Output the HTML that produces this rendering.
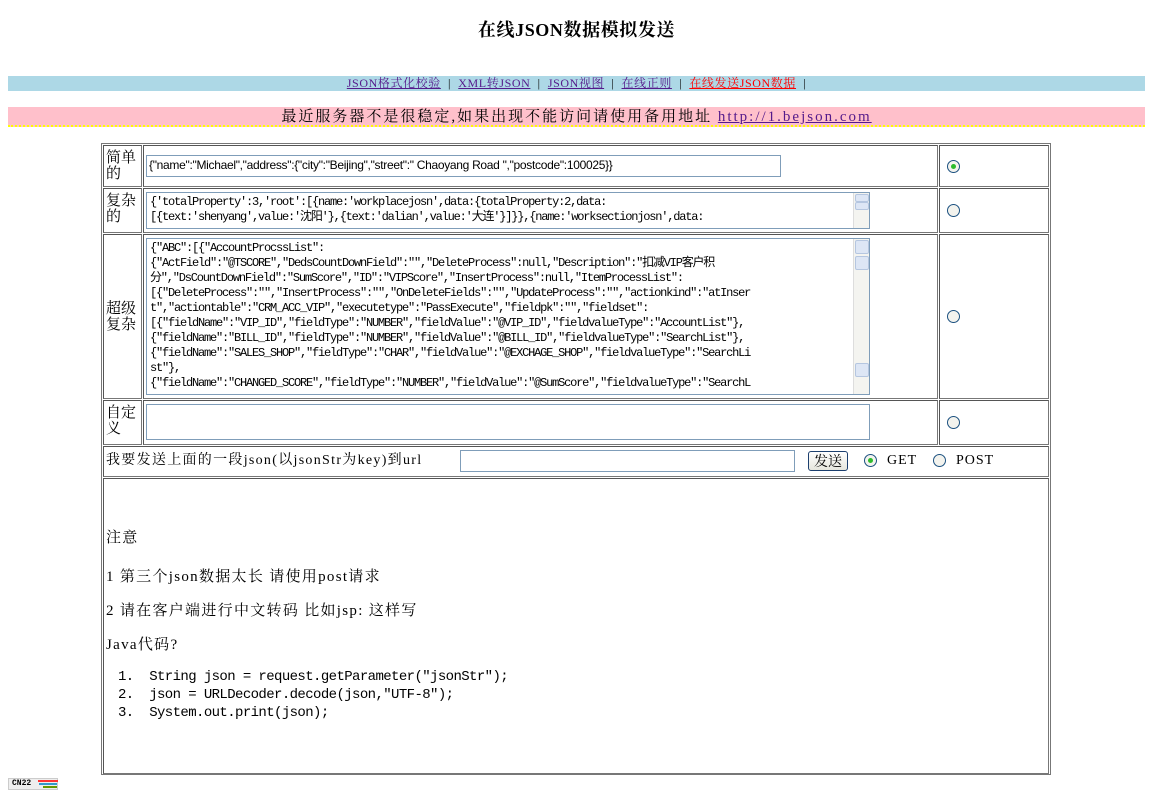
<!DOCTYPE html>
<html><head><meta charset="utf-8"><style>
*{box-sizing:border-box}
body{margin:0;width:1153px;height:801px;background:#fff;position:relative;font-family:"Liberation Serif","Noto Serif CJK SC",serif;font-size:14px;color:#000;overflow:hidden}
.a{position:absolute}
.cell{position:absolute;border:1px solid #777;border-top-color:#555;border-left-color:#555}
.ta{position:absolute;border:1px solid #7f9db9;background:#fff;overflow:hidden;font-family:"Liberation Mono","Noto Sans CJK SC",monospace;font-size:12px;line-height:15px;white-space:pre;letter-spacing:-1.2px;padding:2px 3px;color:#000}
.sb{position:absolute;right:0;top:0;bottom:0;width:16px;background:#f4f4f0;border-left:1px solid #ddd}
.btn{position:absolute;left:1px;width:14px;height:14px;border:1px solid #b5c6e0;background:#dde6f5;border-radius:2px}
.radio{position:absolute;width:13px;height:13px;border:1px solid #1c5180;border-radius:50%;background:#f3f3ee}
.radio.on::after{content:"";position:absolute;left:3px;top:3px;width:5px;height:5px;border-radius:50%;background:#2dbb2d}
a{color:#551a8b}
.lab{position:absolute;font-size:15px;line-height:16px;font-family:"Noto Serif CJK SC",serif}
</style></head><body>
<div class="a" style="left:0;width:1153px;top:16px;text-align:center;font-size:18px;font-weight:bold;letter-spacing:0.6px">在线JSON数据模拟发送</div>
<div class="a" style="left:8px;width:1137px;top:76px;height:15px;background:#add8e6;text-align:center;font-size:12px;line-height:15px;letter-spacing:0.6px">
<a href="#">JSON格式化校验</a> &nbsp;|&nbsp; <a href="#">XML转JSON</a> &nbsp;|&nbsp; <a href="#">JSON视图</a> &nbsp;|&nbsp; <a href="#">在线正则</a> &nbsp;|&nbsp; <a href="#" style="color:red">在线发送JSON数据</a> &nbsp;|</div>
<div class="a" style="left:8px;width:1137px;top:107px;height:20px;background:#ffc0cb;border-bottom:2px dotted #ff0;text-align:center;font-size:15px;line-height:20px;letter-spacing:2px">最近服务器不是很稳定,如果出现不能访问请使用备用地址 <a href="#">http://1.bejson.com</a></div>

<div class="a" style="left:101px;top:143px;width:950px;height:632px;border:1px solid #777"></div>

<div class="cell" style="left:103px;top:145px;width:39px;height:42px"></div>
<div class="lab" style="left:106px;top:149px">简单<br>的</div>
<div class="cell" style="left:143px;top:145px;width:795px;height:42px"></div>
<div class="ta" style="left:146px;top:155px;width:635px;height:22px;font-family:'Liberation Sans',sans-serif;font-size:12px;letter-spacing:-0.3px;line-height:16px;padding:1px 2px">{"name":"Michael","address":{"city":"Beijing","street":" Chaoyang Road ","postcode":100025}}</div>
<div class="cell" style="left:939px;top:145px;width:110px;height:42px"></div>
<div class="radio on" style="left:947px;top:160px"></div>

<div class="cell" style="left:103px;top:188px;width:39px;height:45px"></div>
<div class="lab" style="left:106px;top:192px">复杂<br>的</div>
<div class="cell" style="left:143px;top:188px;width:795px;height:45px"></div>
<div class="ta" style="left:146px;top:192px;width:724px;height:37px">{'totalProperty':3,'root':[{name:'workplacejosn',data:{totalProperty:2,data:
[{text:'shenyang',value:'沈阳'},{text:'dalian',value:'大连'}]}},{name:'worksectionjosn',data:<div class="sb"><div class="btn" style="top:1px;height:8px"></div><div class="btn" style="top:9px;height:8px"></div></div></div>
<div class="cell" style="left:939px;top:188px;width:110px;height:45px"></div>
<div class="radio" style="left:947px;top:204px"></div>

<div class="cell" style="left:103px;top:234px;width:39px;height:165px"></div>
<div class="lab" style="left:106px;top:300px">超级<br>复杂</div>
<div class="cell" style="left:143px;top:234px;width:795px;height:165px"></div>
<div class="ta" style="left:146px;top:238px;width:724px;height:157px">{"ABC":[{"AccountProcssList":
{"ActField":"@TSCORE","DedsCountDownField":"","DeleteProcess":null,"Description":"扣减VIP客户积
分","DsCountDownField":"SumScore","ID":"VIPScore","InsertProcess":null,"ItemProcessList":
[{"DeleteProcess":"","InsertProcess":"","OnDeleteFields":"","UpdateProcess":"","actionkind":"atInser
t","actiontable":"CRM_ACC_VIP","executetype":"PassExecute","fieldpk":"","fieldset":
[{"fieldName":"VIP_ID","fieldType":"NUMBER","fieldValue":"@VIP_ID","fieldvalueType":"AccountList"},
{"fieldName":"BILL_ID","fieldType":"NUMBER","fieldValue":"@BILL_ID","fieldvalueType":"SearchList"},
{"fieldName":"SALES_SHOP","fieldType":"CHAR","fieldValue":"@EXCHAGE_SHOP","fieldvalueType":"SearchLi
st"},
{"fieldName":"CHANGED_SCORE","fieldType":"NUMBER","fieldValue":"@SumScore","fieldvalueType":"SearchL<div class="sb"><div class="btn" style="top:1px"></div><div class="btn" style="top:17px"></div><div class="btn" style="top:124px"></div></div></div>
<div class="cell" style="left:939px;top:234px;width:110px;height:165px"></div>
<div class="radio" style="left:947px;top:310px"></div>

<div class="cell" style="left:103px;top:400px;width:39px;height:45px"></div>
<div class="lab" style="left:106px;top:404px">自定<br>义</div>
<div class="cell" style="left:143px;top:400px;width:795px;height:45px"></div>
<div class="ta" style="left:146px;top:404px;width:724px;height:36px"></div>
<div class="cell" style="left:939px;top:400px;width:110px;height:45px"></div>
<div class="radio" style="left:947px;top:416px"></div>

<div class="cell" style="left:103px;top:446px;width:946px;height:31px"></div>
<div class="lab" style="left:106px;top:453px;font-size:14px;letter-spacing:1.3px;font-family:'Liberation Serif','Noto Serif CJK SC',serif">我要发送上面的一段json(以jsonStr为key)到url</div>
<div class="a" style="left:460px;top:450px;width:335px;height:22px;border:1px solid #7f9db9"></div>
<div class="a" style="left:808px;top:451px;width:40px;height:20px;border:1px solid #1c3f6e;border-radius:3px;background:linear-gradient(#fff,#e6e6dd);font-size:14px;text-align:center;line-height:18px;font-family:'Noto Serif CJK SC',serif">发送</div>
<div class="radio on" style="left:864px;top:454px"></div>
<div class="a" style="left:887px;top:453px;font-size:14px;letter-spacing:1px">GET</div>
<div class="radio" style="left:933px;top:454px"></div>
<div class="a" style="left:956px;top:453px;font-size:14px;letter-spacing:1px">POST</div>

<div class="cell" style="left:103px;top:478px;width:946px;height:296px"></div>
<div class="a" style="left:106px;top:530px;font-size:15px;line-height:17px;letter-spacing:1.3px">注意</div>
<div class="a" style="left:106px;top:565px;font-size:15px;letter-spacing:1.3px">1 第三个json数据太长 请使用post请求</div>
<div class="a" style="left:106px;top:599px;font-size:15px;letter-spacing:1.3px">2 请在客户端进行中文转码 比如jsp: 这样写</div>
<div class="a" style="left:106px;top:633px;font-size:15px;letter-spacing:1.3px">Java代码?</div>
<div class="a" style="left:118px;top:668px;font-size:14px;line-height:18px;font-family:'Liberation Mono',monospace;white-space:pre;letter-spacing:-0.6px">1.  String json = request.getParameter("jsonStr");
2.  json = URLDecoder.decode(json,"UTF-8");
3.  System.out.print(json);</div>

<div class="a" style="left:8px;top:778px;width:50px;height:12px;border:1px solid #ccc;background:#eee;font:bold 8px 'Liberation Mono',monospace;line-height:10px;padding-left:3px">CN22</div>
<div class="a" style="left:38px;top:780px;width:20px;height:2px;background:#f33"></div>
<div class="a" style="left:39px;top:783px;width:18px;height:2px;background:#39c"></div>
<div class="a" style="left:43px;top:786px;width:14px;height:2px;background:#690"></div>
</body></html>
